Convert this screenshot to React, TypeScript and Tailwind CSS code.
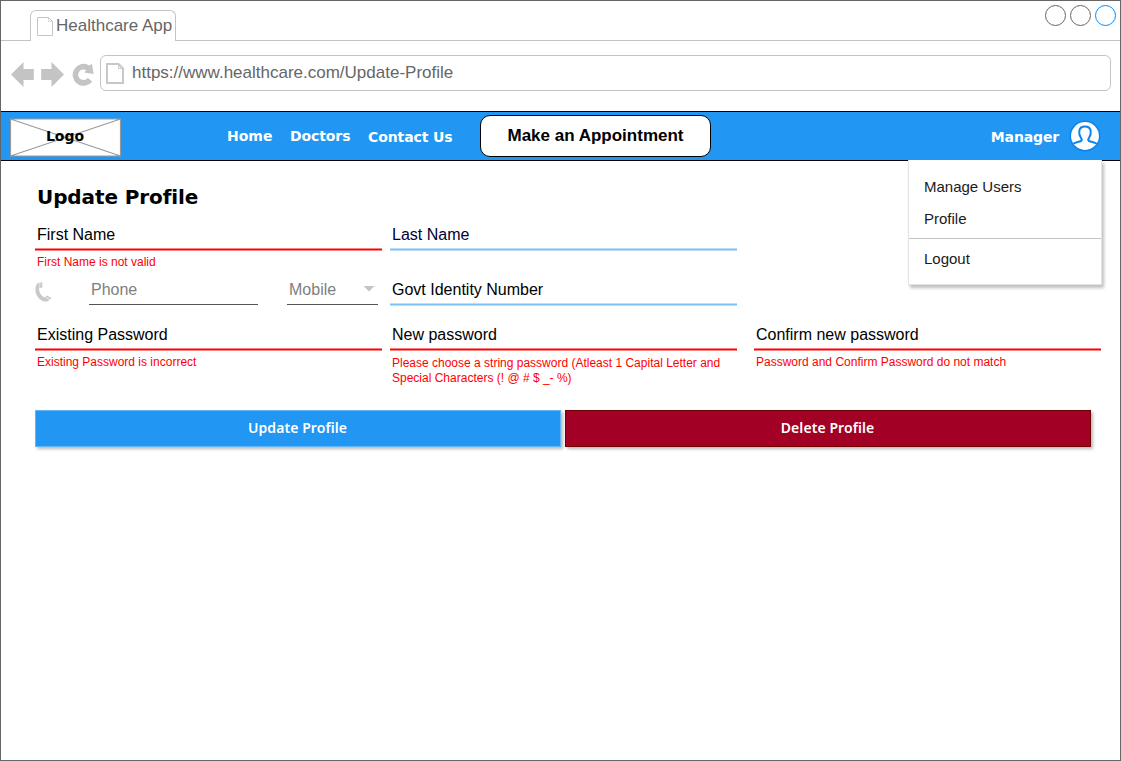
import React from 'react';

type Tone = 'error' | 'normal';

function Field({ label, tone, error, dark }: { label: string; tone: Tone; error?: React.ReactNode; dark?: boolean }) {
  return (
    <div className="flex w-[347px] flex-col">
      <label className={`h-[23px] pl-[2px] text-[16px] leading-[20px] ${dark ? 'text-[#000033]' : 'text-black'}`}>{label}</label>
      <div
        className={
          tone === 'error'
            ? 'h-[3px] border-y border-[#ff8080] bg-[#ff0000]'
            : 'h-[3px] border-y border-[#bbdefb] bg-[#7cc0f8]'
        }
      />
      {error && <p className="pt-[1px] pl-[2px] text-[12px] text-[#ff0000]">{error}</p>}
    </div>
  );
}

export default function App() {
  return (
    <div className="flex h-[761px] w-[1121px] flex-col overflow-hidden border border-[#666666] bg-white font-['Liberation_Sans',Arial,sans-serif]">
      {/* tab strip */}
      <header className="flex h-[40px] shrink-0 items-start border-b border-[#c4c4c4]">
        <div className="mt-[9px] ml-[29px] flex h-[31px] w-[146px] rounded-t-[6px] border border-b-0 border-[#c4c4c4] bg-white pl-[6px]">
          <svg className="mt-[6px] h-[20px] w-[17px] shrink-0" viewBox="0 0 17 20" fill="none" stroke="#c4c4c4">
            <path d="M0.5 0.5H11.5L15.5 4.5V18.5H0.5Z" />
            <path d="M11.5 0.5V4.5H15.5" strokeOpacity=".6" />
          </svg>
          <span className="ml-[2px] pt-[5px] text-[17px] leading-[20px] whitespace-nowrap text-[#666666]">Healthcare App</span>
        </div>
        <div className="mt-[4px] mr-[4px] ml-auto flex gap-[4px]">
          <span className="size-[21px] rounded-full border border-[#666666]" />
          <span className="size-[21px] rounded-full border border-[#666666]" />
          <span className="size-[21px] rounded-full border border-[#008cff]" />
        </div>
      </header>

      {/* address bar */}
      <div className="flex h-[70px] shrink-0 items-start pt-[14px] pl-[10px]">
        <svg className="mt-[6px] h-[28px] w-[84px] shrink-0" viewBox="0 0 84 28" fill="#c4c4c4">
          <path d="M0 13.5L12.5 1V8H22.8V19H12.5V26Z" />
          <path d="M53 13.5L40.5 1V8H30.2V19H40.5V26Z" />
          <path d="M81.2 20.8A11 11 0 1 1 78.4 4.4L81 2.8L82.6 12.9L73.2 11.4L75.3 9.2A5.3 5.3 0 1 0 76.8 16.8Z" />
        </svg>
        <div className="ml-[5px] flex h-[36px] w-[1011px] rounded-[6px] border border-[#c4c4c4]">
          <svg className="mt-[7px] ml-[5px] h-[21px] w-[18px] shrink-0" viewBox="0 0 18 21" fill="none" stroke="#c8c8c8" strokeWidth="2">
            <path d="M1 1H12.5L17 5.5V20H1Z" />
            <path d="M12.5 1V5.5H17" strokeWidth="1" />
          </svg>
          <span className="ml-[8px] pt-[7px] text-[17px] leading-[20px] text-[#666666]">https://www.healthcare.com/Update-Profile</span>
        </div>
      </div>

      {/* navigation */}
      <nav className="relative -mx-px flex h-[50px] shrink-0 items-start border border-black bg-[#2196f3] font-['DejaVu_Sans',Verdana,sans-serif] text-[14px] leading-[18px] font-bold text-white">
        <div className="mt-[6px] ml-[9px] grid h-[39px] w-[111px] shrink-0 text-black">
          <svg className="col-start-1 row-start-1 h-[39px] w-[111px]" viewBox="0 0 111 39">
            <path d="M.5 1H110.5V38H.5ZM.5 1L110.5 38M110.5 1L.5 38" fill="#fff" stroke="#999999" strokeWidth="1.2" />
          </svg>
          <span className="z-10 col-start-1 row-start-1 pt-[9px] pr-[1px] text-center">Logo</span>
        </div>
        <a className="mt-[15px] ml-[106px] w-[63px]">Home</a>
        <a className="mt-[15px] w-[78px] tracking-[-0.1px]">Doctors</a>
        <a className="mt-[16px] w-[112px] tracking-[-0.1px] whitespace-nowrap">Contact Us</a>
        <button className="mt-[3px] h-[42px] w-[231px] rounded-[10px] border border-black bg-white font-['Liberation_Sans',Arial,sans-serif] text-[17px] font-bold text-black">
          <span className="block pb-[1px]">Make an Appointment</span>
        </button>
        <span className="mt-[16px] ml-auto tracking-[-0.15px]">Manager</span>
        <svg className="mt-[8px] mr-[19px] ml-[10px] size-[32px]" viewBox="0 0 32 32">
          <circle cx="16" cy="16" r="14.7" fill="#fff" stroke="#0c84ee" strokeWidth="1.5" />
          <path
            d="M4.2 23.8C6.5 22 9.5 22.2 12 21C13.6 20.2 12.6 19 11.9 17.8C10.4 15.6 10 13.2 10.3 11C10.7 8 12.7 6.4 16 6.4S21.3 8 21.7 11C22 13.2 21.6 15.6 20.1 17.8C19.4 19 18.4 20.2 20 21C22.5 22.2 25.5 22 27.8 23.8"
            fill="none"
            stroke="#0c84ee"
            strokeWidth="2"
          />
        </svg>
        <div className="absolute top-[48px] right-[18px] z-20 h-[125px] w-[194px] border border-t-0 border-[#e4e4e4] bg-white pt-[11px] font-['Liberation_Sans',Arial,sans-serif] text-[15px] leading-[32px] font-normal text-[#1a1a1a] shadow-[2px_3px_3px_rgba(0,0,0,0.25)]">
          <div className="pl-[15px]">Manage Users</div>
          <div className="h-[36px] border-b border-[#c4c4c4] pl-[15px]">Profile</div>
          <div className="pt-[4px] pl-[15px]">Logout</div>
        </div>
      </nav>

      {/* profile form */}
      <main className="flex flex-col pl-[34px]">
        <h1 className="mt-[23px] h-[41px] pl-[2px] font-['DejaVu_Sans',Verdana,sans-serif] text-[20px] leading-[26px] font-bold tracking-[-0.1px]">Update Profile</h1>
        <div className="flex h-[55px]">
          <Field label="First Name" tone="error" error={<span className="block pt-[3px] leading-[15px]">First Name is not valid</span>} />
          <div className="w-[8px]" />
          <Field label="Last Name" tone="normal" dark />
        </div>
        <div className="flex h-[45px] text-[16px] leading-[20px] text-[#808080]">
          <svg className="mt-[2px] h-[20px] w-[18px] shrink-0" viewBox="0 0 18 20" fill="#c9c9c9">
            <path d="M3 1L4.6 .5V6.3L3.9 6.8C4 10.2 6.2 13.7 9 15.3L10 14.8L14.4 18C12.8 19.8 10 20 7.2 18.7C2.7 16.6 .2 11.7 .5 6.7C.6 4 1.4 1.9 3 1Z" />
            <path d="M5.2 .4L6.9 .3L7.3 .8V5.2L6.9 5.8L5.2 6.2Z" />
            <path d="M10.6 14.4L11.9 13.5L16.3 16L16.2 16.6L14.9 17.6Z" />
          </svg>
          <div className="ml-[36px] h-[25px] w-[169px] border-b border-[#555] pl-[2px]">Phone</div>
          <div className="ml-[29px] flex h-[25px] w-[91px] justify-between border-b border-[#555] pl-[2px]">
            <span>Mobile</span>
            <svg className="mt-[6px] mr-[3px] h-[6px] w-[12px]" viewBox="0 0 12 6" fill="#c4c4c4">
              <path d="M.5 0H11.5L6 5.6Z" />
            </svg>
          </div>
          <div className="w-[12px]" />
          <Field label="Govt Identity Number" tone="normal" />
        </div>
        <div className="flex h-[85px]">
          <Field label="Existing Password" tone="error" error={<span className="block pt-[3px] leading-[15px]">Existing Password is incorrect</span>} />
          <div className="w-[8px]" />
          <Field
            label="New password"
            tone="error"
            error={
              <span className="block pt-[4px] leading-[15px]">
                Please choose a string password (Atleast 1 Capital Letter and
                <br />
                Special Characters (! @ # $ _- %)
              </span>
            }
          />
          <div className="w-[17px]" />
          <Field label="Confirm new password" tone="error" error={<span className="block pt-[3px] leading-[15px]">Password and Confirm Password do not match</span>} />
        </div>
        <div className="flex gap-[4px] font-['Noto_Sans','Open_Sans',sans-serif] text-[14px] font-semibold tracking-[0.07px] text-white">
          <button className="h-[37px] w-[526px] border border-[#64b5f6] bg-[#2196f3] pr-[1px] pb-[2px] shadow-[2px_2px_3px_rgba(0,0,0,0.28)]">Update Profile</button>
          <button className="h-[37px] w-[526px] border border-[#6f0000] bg-[#a20025] pr-[1px] pb-[2px] shadow-[2px_2px_3px_rgba(0,0,0,0.28)]">Delete Profile</button>
        </div>
      </main>
    </div>
  );
}
